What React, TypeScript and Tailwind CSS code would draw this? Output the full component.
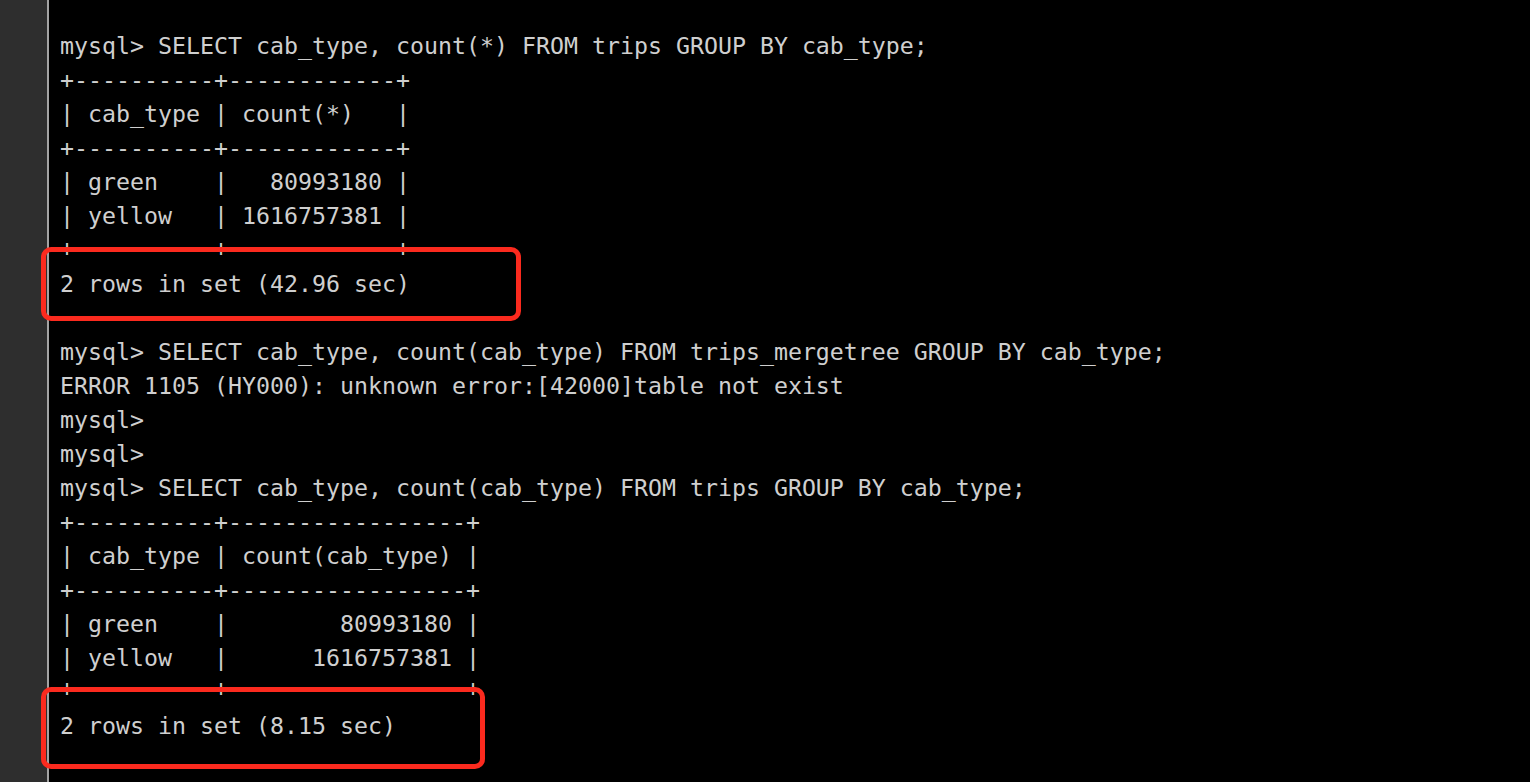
const before = [
  "mysql> SELECT cab_type, count(*) FROM trips GROUP BY cab_type;",
  "+----------+------------+",
  "| cab_type | count(*)   |",
  "+----------+------------+",
  "| green    |   80993180 |",
  "| yellow   | 1616757381 |",
];

const middle = [
  "",
  "mysql> SELECT cab_type, count(cab_type) FROM trips_mergetree GROUP BY cab_type;",
  "ERROR 1105 (HY000): unknown error:[42000]table not exist",
  "mysql>",
  "mysql>",
  "mysql> SELECT cab_type, count(cab_type) FROM trips GROUP BY cab_type;",
  "+----------+-----------------+",
  "| cab_type | count(cab_type) |",
  "+----------+-----------------+",
  "| green    |        80993180 |",
  "| yellow   |      1616757381 |",
];

const Line = ({ text, className = "" }: { text: string; className?: string }) => (
  <div className={`h-[34px] leading-[34px] whitespace-pre ${className}`}>{text || " "}</div>
);

export default function App() {
  return (
    <div className="flex h-screen w-full overflow-hidden bg-black">
      <aside className="w-[49px] shrink-0 bg-[#2e2e2e] border-r-2 border-[#a3a3a3]" />
      <main
        className="flex-1 pl-[11px] pt-[29px] text-[23.25px] text-[#cfcfcf]"
        style={{ fontFamily: '"DejaVu Sans Mono", "Liberation Mono", monospace' }}
      >
        {before.map((t, i) => (
          <Line key={`a${i}`} text={t} />
        ))}
        <div className="relative">
          <Line text="+----------+------------+" className="-translate-y-[2px]" />
          <Line text="2 rows in set (42.96 sec)" />
          <span className="absolute z-10 top-[14px] left-[-19px] w-[480px] h-[74px] rounded-[10px] border-[5px] border-[#fb2a1e]" />
        </div>
        {middle.map((t, i) => (
          <Line key={`b${i}`} text={t} />
        ))}
        <div className="relative">
          <Line text="+----------+-----------------+" className="-translate-y-[4px]" />
          <Line text="2 rows in set (8.15 sec)" />
          <span className="absolute z-10 top-[12px] left-[-19px] w-[444px] h-[82px] rounded-[10px] border-[5px] border-[#fb2a1e]" />
        </div>
      </main>
    </div>
  );
}
